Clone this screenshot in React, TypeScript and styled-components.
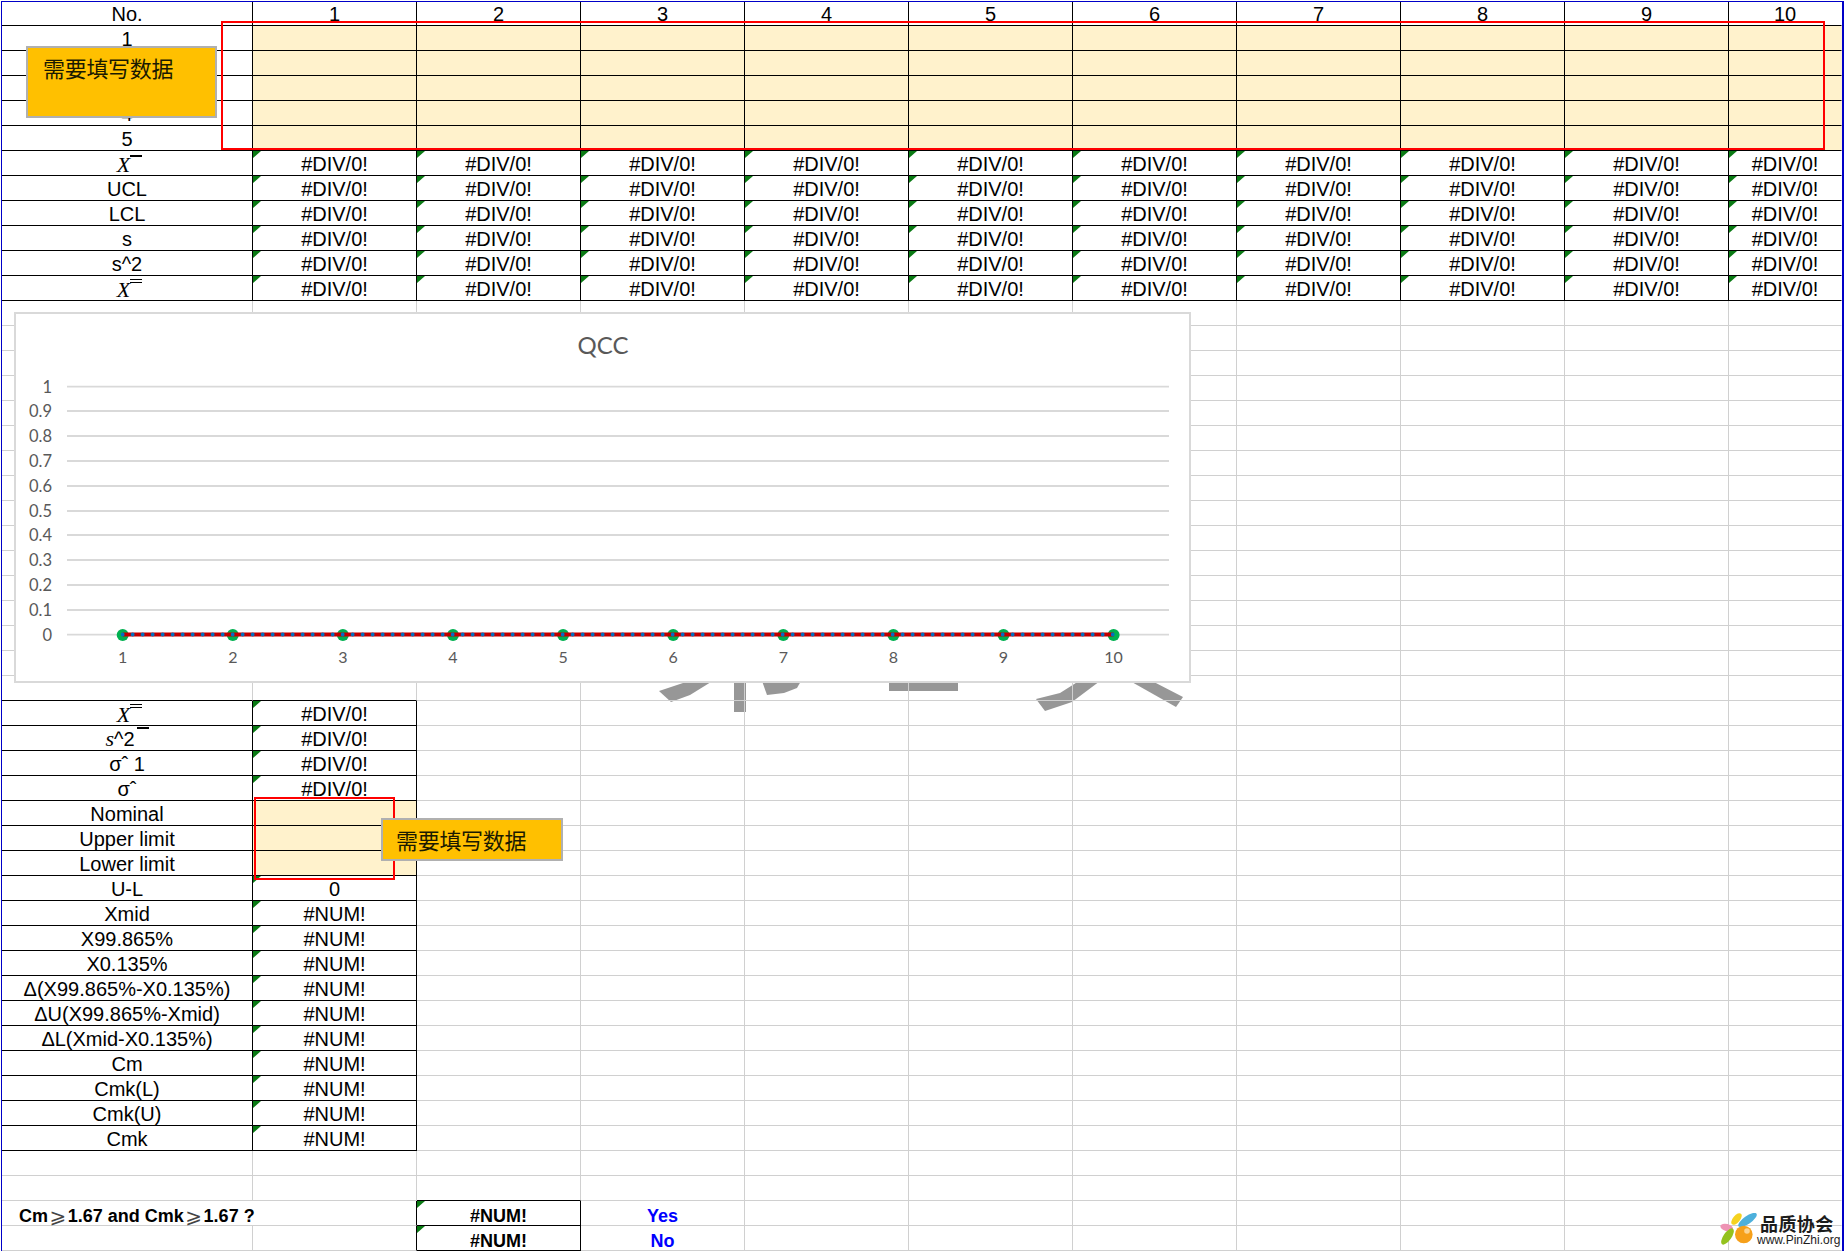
import React from "react";
import styled, { createGlobalStyle } from "styled-components";

const Global = createGlobalStyle`
  html, body { margin: 0; padding: 0; background: #fff; }
  body { font-family: "Liberation Sans", Arial, sans-serif; overflow: hidden; }
`;

const BLACK = "#000000";
const GREY = "#d0d0d0";
const CREAM = "#fff2cc";

const Page = styled.div`
  position: relative;
  width: 1844px;
  height: 1251px;
  overflow: hidden;
  background: #fff;
`;

const Sheet = styled.div`
  position: relative;
  margin: 1px 0 0 1px;
  width: 1843px;
  height: 1250px;
  box-sizing: border-box;
  border-top: 1px solid #0000c8;
  border-left: 1px solid #0000c8;
  border-right: 2px solid #0000c8;
`;

const Row = styled.div<{ $first?: boolean }>`
  display: grid;
  grid-template-columns: 251px repeat(9, 164px) 1fr;
  height: ${(p) => (p.$first ? 24 : 25)}px;
`;

const Cell = styled.div<{
  $right: string;
  $bottom: string;
  $fill?: boolean;
  $mark?: boolean;
  $span?: number;
  $bold?: boolean;
  $blue?: boolean;
  $left?: boolean;
}>`
  position: relative;
  box-sizing: border-box;
  min-width: 0;
  grid-column: span ${(p) => p.$span ?? 1};
  display: flex;
  align-items: flex-end;
  justify-content: ${(p) => (p.$left ? "flex-start" : "center")};
  padding-left: ${(p) => (p.$left ? 17 : 0)}px;
  border-right: 1px solid ${(p) => p.$right};
  border-bottom: 1px solid ${(p) => p.$bottom};
  background: ${(p) => (p.$fill ? CREAM : "transparent")};
  color: ${(p) => (p.$blue ? "#0000ff" : "#000")};
  font-size: ${(p) => (p.$bold ? 18 : 20)}px;
  font-weight: ${(p) => (p.$bold ? 700 : 400)};
  line-height: ${(p) => (p.$bold ? 17 : 21)}px;
  white-space: nowrap;
  &::before {
    content: "";
    display: ${(p) => (p.$mark ? "block" : "none")};
    position: absolute;
    left: 0;
    top: 0;
    border-top: 7px solid #0a7a14;
    border-right: 8px solid transparent;
  }
`;

const Slim = styled.span`
  font-family: "DejaVu Sans", "Noto Sans CJK SC", sans-serif;
  font-size: 20px;
  font-weight: 400;
  color: #444;
  padding: 0 1.5px;
`;

const MathVar = styled.span<{ $bars?: number; $gap?: number }>`
  position: relative;
  display: inline-block;
  font-family: "Liberation Serif", "Times New Roman", serif;
  font-style: italic;
  font-size: 22px;
  padding-right: ${(p) => p.$gap ?? 0}px;
  &::after {
    content: "";
    display: ${(p) => (p.$bars ? "block" : "none")};
    position: absolute;
    left: 13px;
    top: ${(p) => (p.$bars === 2 ? 0 : 1)}px;
    width: 12px;
    box-sizing: border-box;
    height: ${(p) => (p.$bars === 2 ? 4 : 2)}px;
    border-top: 1px solid #000;
    border-bottom: ${(p) => (p.$bars === 2 ? "1px solid #000" : "none")};
    background: ${(p) => (p.$bars === 2 ? "transparent" : "#000")};
  }
`;

const SquareText = styled.span`
  position: relative;
  display: inline-block;
  padding-right: 14px;
`;

const Bar = styled.span`
  position: absolute;
  right: 0;
  top: -1px;
  width: 12px;
  height: 2px;
  background: #000;
`;

const Callout = styled.div<{ $x: number; $y: number; $w: number; $h: number; $top: number; $side: number }>`
  position: absolute;
  left: ${(p) => p.$x}px;
  top: ${(p) => p.$y}px;
  width: ${(p) => p.$w}px;
  height: ${(p) => p.$h}px;
  box-sizing: border-box;
  padding: ${(p) => p.$top}px 0 0 ${(p) => p.$side}px;
  background: #ffc000;
  border: 2px solid #b0b0b0;
  color: #1a1a00;
  font-family: "Noto Sans CJK SC", sans-serif;
  font-size: 22px;
  letter-spacing: -0.3px;
  line-height: 26px;
  white-space: nowrap;
`;

const RedFrame = styled.div<{ $x: number; $y: number; $w: number; $h: number }>`
  position: absolute;
  left: ${(p) => p.$x}px;
  top: ${(p) => p.$y}px;
  width: ${(p) => p.$w}px;
  height: ${(p) => p.$h}px;
  box-sizing: border-box;
  border: 2px solid #ff0000;
`;

const Chart = styled.div`
  position: absolute;
  left: 14px;
  top: 312px;
  width: 1177px;
  height: 371px;
  box-sizing: border-box;
  background: #fff;
  border: 2px solid #d9d9d9;
`;

const ChartSvg = styled.svg`
  display: block;
  width: 1173px;
  height: 367px;
  font-family: Lato, "Open Sans", sans-serif;
  fill: #595959;
`;

const Watermark = styled.svg`
  position: absolute;
  left: 640px;
  top: 670px;
  width: 560px;
  height: 50px;
`;

const Logo = styled.div`
  position: absolute;
  right: 4px;
  top: 1213px;
  display: flex;
  width: 120px;
  height: 34px;
`;

const LogoMark = styled.svg`
  flex: none;
  width: 38px;
  height: 33px;
  margin-right: -1px;
`;

const LogoText = styled.div`
  display: flex;
  flex-direction: column;
  align-items: flex-start;
`;

const LogoName = styled.div`
  margin-left: 3px;
  font-family: "Noto Sans CJK SC", sans-serif;
  font-weight: 700;
  font-size: 18px;
  line-height: 21px;
  letter-spacing: 0.4px;
  color: #1c1c1c;
  white-space: nowrap;
`;

const LogoUrl = styled.div`
  font-size: 12px;
  line-height: 12px;
  color: #1c1c1c;
  white-space: nowrap;
`;

type CellSpec = {
  text?: React.ReactNode;
  right?: string;
  bottom?: string;
  fill?: boolean;
  mark?: boolean;
  span?: number;
  bold?: boolean;
  blue?: boolean;
  left?: boolean;
};

const XBar = ({ bars }: { bars: number }) => (
  <MathVar $bars={bars} $gap={7}>
    X
  </MathVar>
);

const SSquaredBar = () => (
  <SquareText>
    <MathVar>s</MathVar>^2
    <Bar />
  </SquareText>
);

const empties = (n: number, bottom = GREY, right = GREY): CellSpec[] =>
  Array.from({ length: n }, () => ({ bottom, right }));

const dataRow = (label: React.ReactNode, val: string): CellSpec[] => [
  { text: label, right: BLACK, bottom: BLACK },
  ...Array.from({ length: 10 }, () => ({ text: val, right: BLACK, bottom: BLACK, mark: true })),
];

const header: CellSpec[] = [
  { text: "No.", right: BLACK, bottom: BLACK },
  ...Array.from({ length: 10 }, (_, i) => ({ text: String(i + 1), right: BLACK, bottom: BLACK })),
];

const inputRow = (label: string): CellSpec[] => [
  { text: label, right: BLACK, bottom: BLACK },
  ...Array.from({ length: 10 }, () => ({ right: BLACK, bottom: BLACK, fill: true })),
];

const pairRow = (label: React.ReactNode, val: string | undefined, opts: Partial<CellSpec> = {}): CellSpec[] => [
  { text: label, right: BLACK, bottom: BLACK },
  { text: val, right: BLACK, bottom: BLACK, mark: true, ...opts },
  ...empties(9),
];

const rows: CellSpec[][] = [
  header,
  ...["1", "2", "3", "4", "5"].map(inputRow),
  dataRow(<XBar bars={1} />, "#DIV/0!"),
  dataRow("UCL", "#DIV/0!"),
  dataRow("LCL", "#DIV/0!"),
  dataRow("s", "#DIV/0!"),
  dataRow("s^2", "#DIV/0!"),
  dataRow(<XBar bars={2} />, "#DIV/0!"),
  ...Array.from({ length: 15 }, () => empties(11)),
  [
    { bottom: BLACK, right: GREY },
    { bottom: BLACK, right: GREY },
    ...empties(9),
  ],
  pairRow(<XBar bars={2} />, "#DIV/0!"),
  pairRow(<SSquaredBar />, "#DIV/0!"),
  pairRow("σˆ 1", "#DIV/0!"),
  pairRow("σˆ", "#DIV/0!"),
  pairRow("Nominal", undefined, { fill: true, mark: false }),
  pairRow("Upper limit", undefined, { fill: true, mark: false }),
  pairRow("Lower limit", undefined, { fill: true, mark: false }),
  pairRow("U-L", "0"),
  pairRow("Xmid", "#NUM!"),
  pairRow("X99.865%", "#NUM!"),
  pairRow("X0.135%", "#NUM!"),
  pairRow("Δ(X99.865%-X0.135%)", "#NUM!"),
  pairRow("ΔU(X99.865%-Xmid)", "#NUM!"),
  pairRow("ΔL(Xmid-X0.135%)", "#NUM!"),
  pairRow("Cm", "#NUM!"),
  pairRow("Cmk(L)", "#NUM!"),
  pairRow("Cmk(U)", "#NUM!"),
  pairRow("Cmk", "#NUM!"),
  empties(11),
  [
    { bottom: GREY, right: GREY },
    { bottom: GREY, right: GREY },
    { bottom: BLACK, right: GREY },
    ...empties(8),
  ],
  [
    {
      span: 2,
      bottom: GREY,
      right: BLACK,
      bold: true,
      left: true,
      text: (
        <>
          Cm<Slim>⩾</Slim>1.67 and Cmk<Slim>⩾</Slim>1.67 ?
        </>
      ),
    },
    { text: "#NUM!", bottom: BLACK, right: BLACK, bold: true, mark: true },
    { text: "Yes", bottom: GREY, right: GREY, bold: true, blue: true },
    ...empties(7),
  ],
  [
    { bottom: GREY, right: GREY },
    { bottom: GREY, right: BLACK },
    { text: "#NUM!", bottom: BLACK, right: BLACK, bold: true, mark: true },
    { text: "No", bottom: GREY, right: GREY, bold: true, blue: true },
    ...empties(7),
  ],
];

const gridYs = [386.7, 411, 436, 461, 486, 511, 535, 560, 585, 610, 634.7];
const yLabels = ["1", "0.9", "0.8", "0.7", "0.6", "0.5", "0.4", "0.3", "0.2", "0.1", "0"];
const xs = Array.from({ length: 10 }, (_, i) => 122.7 + i * 110.1);

const QccChart = () => (
  <Chart>
    <ChartSvg viewBox="16 314 1173 367">
      <text x={603} y={354} fontSize={24} textAnchor="middle">QCC</text>
      {gridYs.map((y, i) => (
        <g key={y}>
          <line x1={67} x2={1169} y1={y} y2={y} stroke="#d9d9d9" strokeWidth={1.8} />
          <text x={52} y={y + 6} fontSize={16.5} textAnchor="end">{yLabels[i]}</text>
        </g>
      ))}
      {xs.map((x) => (
        <circle key={x} cx={x} cy={635} r={6} fill="#00b050" />
      ))}
      <line x1={122.7} x2={1113.6} y1={634.5} y2={634.5} stroke="#c00000" strokeWidth={3.8} />
      <line x1={122.7} x2={1113.6} y1={634.5} y2={634.5} stroke="#0070c0" strokeWidth={3.8} strokeLinecap="round" strokeDasharray="0 10" />
      {xs.map((x, i) => (
        <text key={x} x={x} y={663} fontSize={16} textAnchor="middle">{i + 1}</text>
      ))}
    </ChartSvg>
  </Chart>
);

const App = () => (
  <Page>
    <Global />
    <Watermark viewBox="640 670 560 50">
      <g fill="#979797">
        <polygon points="659,691 686,682 711,682 690,695 671,702" />
        <polygon points="734,681 746,681 746,712 734,712" />
        <polygon points="762,681 801,681 797,688 784,693 767,695" />
        <polygon points="889,681 958,681 958,691 889,691" />
        <polygon points="1036,699 1060,693 1079,681 1100,681 1072,702 1045,711" />
        <polygon points="1130,681 1152,681 1183,697 1176,707" />
      </g>
    </Watermark>
    <Sheet>
      {rows.map((row, r) => (
        <Row key={r} $first={r === 0}>
          {row.map((c, i) => (
            <Cell
              key={i}
              $right={i === row.length - 1 ? "transparent" : c.right ?? GREY}
              $bottom={c.bottom ?? GREY}
              $fill={c.fill}
              $mark={c.mark}
              $span={c.span}
              $bold={c.bold}
              $blue={c.blue}
              $left={c.left}
            >
              {c.text}
            </Cell>
          ))}
        </Row>
      ))}
    </Sheet>
    <QccChart />
    <Callout $x={26} $y={46} $w={191} $h={72} $top={6} $side={15}>需要填写数据</Callout>
    <RedFrame $x={221} $y={21} $w={1604} $h={129} />
    <RedFrame $x={254} $y={797} $w={141} $h={83} />
    <Callout $x={381} $y={818} $w={182} $h={43} $top={6} $side={13}>需要填写数据</Callout>
    <Logo>
      <LogoMark viewBox="0 0 38 33">
        <ellipse cx="6.7" cy="14.5" rx="6.5" ry="3.5" fill="#ee93b4" transform="rotate(15 6.7 14.5)" />
        <ellipse cx="16.5" cy="6" rx="3.5" ry="7" fill="#f5d21f" transform="rotate(40 16.5 6)" />
        <ellipse cx="27.5" cy="7" rx="4" ry="11" fill="#4db0dc" transform="rotate(55 27.5 7)" />
        <ellipse cx="7.5" cy="23.5" rx="4" ry="9.5" fill="#94c21e" transform="rotate(35 7.5 23.5)" />
        <circle cx="23.8" cy="21.5" r="8.8" fill="#f6a01a" />
        <circle cx="27" cy="18" r="2.8" fill="#fbd493" />
      </LogoMark>
      <LogoText>
        <LogoName>品质协会</LogoName>
        <LogoUrl>www.PinZhi.org</LogoUrl>
      </LogoText>
    </Logo>
  </Page>
);

export default App;
